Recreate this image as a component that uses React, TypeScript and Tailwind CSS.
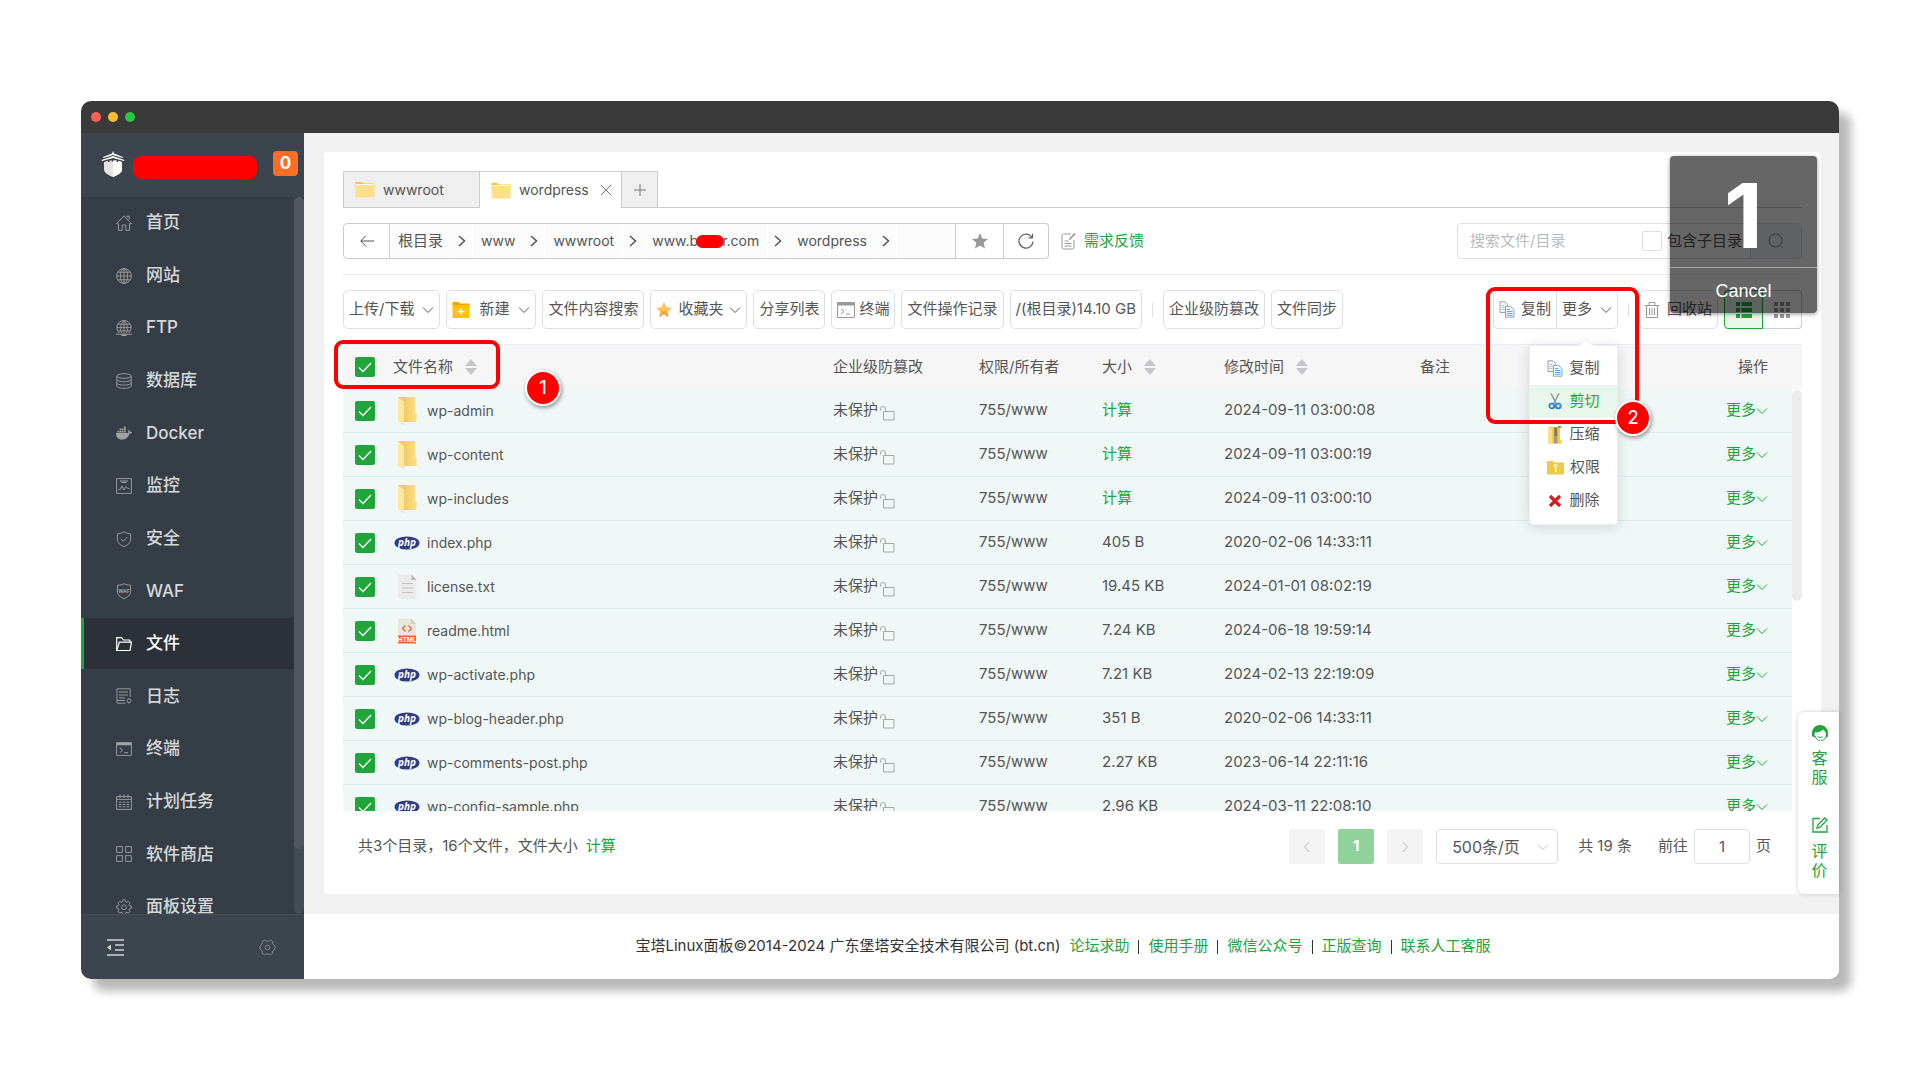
import React, { useState } from "react";
import clsx from "clsx";

type IconProps = { className?: string };

const navItems = [
  { name: "首页", icon: "home" },
  { name: "网站", icon: "globe" },
  { name: "FTP", icon: "ftp" },
  { name: "数据库", icon: "database" },
  { name: "Docker", icon: "docker" },
  { name: "监控", icon: "monitor" },
  { name: "安全", icon: "shield" },
  { name: "WAF", icon: "waf" },
  { name: "文件", icon: "folder" },
  { name: "日志", icon: "log" },
  { name: "终端", icon: "terminal" },
  { name: "计划任务", icon: "calendar" },
  { name: "软件商店", icon: "store" },
  { name: "面板设置", icon: "gear" },
];

const files = [
  { name: "wp-admin", type: "dir", size: "", time: "2024-09-11 03:00:08" },
  { name: "wp-content", type: "dir", size: "", time: "2024-09-11 03:00:19" },
  { name: "wp-includes", type: "dir", size: "", time: "2024-09-11 03:00:10" },
  { name: "index.php", type: "php", size: "405 B", time: "2020-02-06 14:33:11" },
  { name: "license.txt", type: "txt", size: "19.45 KB", time: "2024-01-01 08:02:19" },
  { name: "readme.html", type: "html", size: "7.24 KB", time: "2024-06-18 19:59:14" },
  { name: "wp-activate.php", type: "php", size: "7.21 KB", time: "2024-02-13 22:19:09" },
  { name: "wp-blog-header.php", type: "php", size: "351 B", time: "2020-02-06 14:33:11" },
  { name: "wp-comments-post.php", type: "php", size: "2.27 KB", time: "2023-06-14 22:11:16" },
  { name: "wp-config-sample.php", type: "php", size: "2.96 KB", time: "2024-03-11 22:08:10" },
];

const footerLinks = ["论坛求助", "使用手册", "微信公众号", "正版查询", "联系人工客服"];

const Gear = () => (
  <>
    <path d="M6.9 .8h2.2l.5 1.9 1.2.5 1.7-1 1.5 1.5-1 1.7.5 1.3 1.8.4v2.1l-1.8.5-.5 1.2 1 1.7-1.5 1.6-1.7-1-1.2.5-.5 1.8H6.9l-.5-1.8-1.2-.5-1.7 1L2 12.6l1-1.7-.5-1.2-1.8-.5V7.1l1.8-.4.5-1.3-1-1.7 1.5-1.5 1.7 1 1.2-.5z" />
    <circle cx="8" cy="8.2" r="2.4" />
  </>
);

const navShapes: Record<string, React.ReactNode> = {
  home: (
    <>
      <path d="M.5 8.8 8 .9l7.5 7.9h-2v6.6H9.8V10H6.2v5.4H2.5V8.8z" />
      <path d="M11 2.4V1.2h2.2v3.4" />
    </>
  ),
  globe: (
    <>
      <circle cx="8" cy="8" r="7.4" />
      <ellipse cx="8" cy="8" rx="3.6" ry="7.4" />
      <path d="M8 .6v14.8M.6 8h14.8M1.8 4.2h12.4M1.8 11.8h12.4" />
    </>
  ),
  ftp: (
    <>
      <path d="M3.4 13.2a7.2 7.2 0 1 1 9.2 0" />
      <path d="M5.6 13.2C3.9 9.6 4.3 3.4 8 .6c3.7 2.8 4.1 9 2.4 12.6M8 .6v12.6M.9 7.6h14.2M2 4.2h12M2 10.9h12M0 14.2h16" />
      <path d="M5.5 15.2h5" strokeWidth="1.6" />
    </>
  ),
  database: (
    <>
      <ellipse cx="8" cy="3" rx="7.2" ry="2.3" />
      <path d="M.8 3v10c0 1.3 3.2 2.4 7.2 2.4s7.2-1.1 7.2-2.4V3M.8 6.4c0 1.3 3.2 2.3 7.2 2.3s7.2-1 7.2-2.3M.8 9.8c0 1.3 3.2 2.3 7.2 2.3s7.2-1 7.2-2.3" />
    </>
  ),
  docker: (
    <g fill="currentColor" stroke="none">
      <path d="M0 8h12.2c.5-.8.3-1.800-.1-2.600l.6-.6c.8.500 1.300 1.200 1.400 2 .7-.1 1.500 0 2 .4-.4 1-1.300 1.500-2.600 1.500C12.300 12.400 9.800 14.500 6 14.500 2 14.500 0 11.800 0 8z" />
      <path d="M1.4 5.700h1.800v1.700H1.400zM3.600 5.700h1.800v1.700H3.600zM5.800 5.700h1.800v1.700H5.800zM8 5.700h1.800v1.700H8zM3.600 3.600h1.800v1.700H3.600zM5.800 3.600h1.800v1.700H5.800zM8 3.600h1.800v1.700H8zM8 1.500h1.800v1.700H8z" />
    </g>
  ),
  monitor: (
    <>
      <path d="M.6.6h14.8v14.8H.6z" />
      <path d="M2.5 11.5h1.8L6 8l2 4 2-3.5 1.6 2h2" />
      <path d="M4 3h8M5.5 4.5h5" strokeWidth="1.2" />
    </>
  ),
  shield: (
    <>
      <path d="M8 .7c2 1.3 4.2 2 6.6 2.1V8c0 3.7-2.5 6.2-6.6 7.5C3.9 14.2 1.4 11.7 1.4 8V2.8C3.8 2.7 6 2 8 .7z" />
      <path d="m4.8 8 2.5 2.3 4-4.3" />
    </>
  ),
  waf: (
    <>
      <path d="M8 .7c2 1 4.2 1.5 6.6 1.5V8c0 3.7-2.5 6.2-6.6 7.5C3.9 14.2 1.4 11.7 1.4 8V2.2C3.8 2.2 6 1.7 8 .7z" />
      <text x="8" y="9.6" textAnchor="middle" fontSize="5" fontWeight="700" fill="currentColor" stroke="none">WAF</text>
    </>
  ),
  folder: (
    <>
      <path d="M.7 14.5V1.6h5L7.4 4h6.4v2.2" />
      <path d="M.7 14.5 3.3 6.2h12.1l-1.3 8.3z" />
    </>
  ),
  log: (
    <>
      <path d="M14.2 9V.8H1v14.4h8.500M3 4h9M3 7h9M3 10h6" />
      <path d="M1 12.500h8" />
      <circle cx="13" cy="12.8" r="1.9" />
      <path d="M13 10v.8M13 14.800v.8" />
    </>
  ),
  terminal: (
    <>
      <path d="M.6 1.6h14.8v12.8H.6z" />
      <path d="M.6 3h14.8" strokeWidth="2.6" />
      <path d="m4 7 2.8 2.2L4 11.4M8 11.6h4" />
    </>
  ),
  calendar: (
    <>
      <path d="M.6 2.6h14.8v12.8H.6zM.6 5.4h14.8M4 .4v3.4M8 .4v3.4M12 .4v3.4" />
      <path d="M2.8 8.2h2.6M6.7 8.2h2.6M10.6 8.2h2.6M2.8 10.5h2.6M6.7 10.5h2.6M10.6 10.5h2.6M2.8 12.8h2.6M6.7 12.8h2.6M10.6 12.8h2.6" />
    </>
  ),
  store: <path d="M.6.6h5.8v5.8H.6zM9.6.6h5.8v5.8H9.6zM.6 9.6h5.8v5.8H.6zM9.6 9.6h5.8v5.8H9.6z" />,
  gear: <Gear />,
};

const Chevron = ({ className }: IconProps) => (
  <svg viewBox="0 0 12 8" className={clsx("h-2 w-3 shrink-0", className)} fill="none" stroke="currentColor">
    <path d="m1 1.5 5 5 5-5" />
  </svg>
);

const Sort = () => (
  <svg viewBox="0 0 12 18" className="h-[18px] w-3" fill="#c4c6c9">
    <path d="M6 1l6 7H0zM6 17l6-7H0z" />
  </svg>
);

const TabFolder = () => (
  <svg viewBox="0 0 20 17" className="h-[17px] w-5">
    <path d="M.5 1h6l1.500 1.500h11.500v3H.5z" fill="#fdc13c" />
    <path d="M1.500 3h17v3h-17z" fill="#fff" />
    <path d="M.5 4h19v12.500H.5z" fill="#fee08a" />
  </svg>
);

const CopyIcon = () => (
  <svg viewBox="0 0 16 17" className="h-[17px] w-4" fill="#f4f7fd" stroke="#9aa0a8">
    <path d="M1 .8h5l2.5 2.5v8.2H1z" />
    <path d="M2.5 4.5h3M2.5 6.5h3M2.5 8.5h3" stroke="#a9c3ef" />
    <path d="M6.5 5.3h5L15 8.5v7.7H6.5z" />
    <path d="M8 8.5h3M8 10.5h5.5M8 12.5h5.5M8 14.3h5.5" stroke="#6fa1f2" />
  </svg>
);

const FileIcon = ({ type }: { type: string }) => {
  if (type === "dir")
    return (
      <svg viewBox="0 0 20 30" className="h-[30px] w-5">
        <defs>
          <linearGradient id="dir" x1="0" x2="1">
            <stop offset="0.3" stopColor="#f1ca66" />
            <stop offset="1" stopColor="#fddf88" />
          </linearGradient>
        </defs>
        <path d="M1 1h17v15l1.500 2v8H1z" fill="url(#dir)" />
        <path d="m1 1 6 5v23.500l-6-4.500z" fill="#fee6a3" />
      </svg>
    );
  if (type === "php")
    return (
      <svg viewBox="0 0 26 14" className="h-3.5 w-[26px]">
        <ellipse cx="13" cy="7" rx="12.5" ry="6.6" fill="#2f3b83" />
        <text x="13" y="9.8" textAnchor="middle" fontSize="10" fontWeight="700" fontStyle="italic" fill="#fff" fontFamily="Open Sans, sans-serif">php</text>
      </svg>
    );
  if (type === "txt")
    return (
      <svg viewBox="0 0 20 26" className="h-[26px] w-5">
        <path d="M2 .5h12.500l5 5.500v18a1 1 0 0 1-1 1H2a1 1 0 0 1-1-1v-22.500a1 1 0 0 1 1-1z" fill="#ebebeb" />
        <path d="M14.500.5v5.500h5z" fill="#b9b9b9" />
        <path d="M5 9.500h11M5 14h11M5 18.500h11" stroke="#c4c4c4" />
      </svg>
    );
  return (
    <svg viewBox="0 0 20 26" className="h-[26px] w-5">
      <path d="M1 .5h13l5 5.500v12H1z" fill="#e9e7dc" />
      <path d="M14 .5v5.500h5z" fill="#cfccbc" />
      <path d="m8.500 7.500-3 3 3 3M11.500 7.500l3 3-3 3" fill="none" stroke="#f0642f" strokeWidth="1.3" />
      <path d="M1 17.500h18v8H1z" fill="#f0642f" />
      <text x="10" y="24" textAnchor="middle" fontSize="6.5" fontWeight="700" fill="#fff" fontFamily="Inter, sans-serif">HTML</text>
    </svg>
  );
};

const Lock = () => (
  <svg viewBox="0 0 16 16" className="mt-1 h-4 w-4" fill="none" stroke="#a3a8a8">
    <path d="M4.500 6.500h10.500v8.500H4.500zM6.500 6.500V4A2.500 2.500 0 0 0 1.500 4v1.500" />
  </svg>
);

const CheckBox = ({ label, checked, onChange }: { label: string; checked: boolean; onChange: () => void }) => (
  <label className="grid h-5 w-5 cursor-pointer">
    <input
      type="checkbox"
      aria-label={label}
      checked={checked}
      onChange={onChange}
      className="col-start-1 row-start-1 h-5 w-5 appearance-none rounded-xs border border-[#dcdfe6] bg-white checked:border-[#20a53a] checked:bg-[#20a53a]"
    />
    {checked && (
      <svg viewBox="0 0 20 20" className="pointer-events-none col-start-1 row-start-1 h-5 w-5" fill="none" stroke="#fff" strokeWidth="1.3">
        <path d="m4 10.500 4 4 8-8.500" />
      </svg>
    )}
  </label>
);

const ToolButton = ({ children, className }: { children: React.ReactNode; className?: string }) => (
  <button
    type="button"
    className={clsx("flex h-[39px] items-center rounded-[5px] border border-[#dcdfe6] bg-white px-[5px] whitespace-nowrap", className)}
  >
    {children}
  </button>
);

const Step = ({ n, className }: { n: number; className?: string }) => (
  <span
    className={clsx(
      "absolute flex h-9 w-9 items-center justify-center rounded-full border-2 border-white bg-[#fe0000] text-lg font-medium text-white shadow-[1px_2px_4px_rgba(0,0,0,0.4)]",
      className,
    )}
  >
    {n}
  </span>
);

const Sidebar = () => (
  <aside className="flex w-[223px] shrink-0 flex-col bg-[#3c444d]">
    <div className="flex h-16 items-center pb-[3px] pl-5">
      <svg viewBox="0 0 24 26" className="h-[26px] w-6" fill="#fff">
        <path d="M12 0 13 2.500l9 3.500-.5 1L12 4 2.500 7 2 6l9-3.500zM12 5l11.500 4-.5 1L12 7 1 10l-.5-1z" />
        <path d="M3 11h1.500v-1H7v1h1.500V9.500H11v1h2v-1h2.500V11H17v-1h2.500v1H21v7.500c0 3-4 5.500-9 7.500-5-2-9-4.500-9-7.500z" fill="#e3e3e3" />
        <path d="M12 9.500h3.500V11H17v-1h2.500v1H21v7.500c0 3-4 5.500-9 7.500z" />
      </svg>
      <span className="mt-2 ml-2 h-[23px] w-[124px] rounded-lg bg-[#fe0000]" />
      <span className="ml-4 flex h-[25px] w-[25px] items-center justify-center rounded bg-[#fd6d25] text-[17px] font-bold text-white">
        0
      </span>
    </div>
    <div className="flex h-[717px] overflow-hidden bg-[#353d46]">
      <nav className="flex-1">
        <ul className="flex h-[735px] flex-col justify-between">
          {navItems.map((item) => {
            const active = item.name === "文件";
            return (
              <li key={item.name}>
                <a
                  href="#"
                  className={clsx(
                    "flex h-[51px] items-center gap-[14px] border-l-3 pt-px pl-8 text-[17px] font-medium",
                    active ? "border-[#20a53a] bg-[#2c3039] text-white" : "border-transparent text-[#d6d8da]",
                  )}
                >
                  <svg
                    viewBox="0 0 16 16"
                    className={clsx("h-4 w-4", active ? "text-white" : "text-[#a0a3a6]")}
                    fill="none"
                    stroke="currentColor"
                    strokeWidth={active ? 1.2 : 0.9}
                  >
                    {navShapes[item.icon]}
                  </svg>
                  {item.name}
                </a>
              </li>
            );
          })}
        </ul>
      </nav>
      <div className="w-[10px] rounded-full bg-[#434b54]">
        <div className="h-[652px] rounded-full bg-[#50575f]" />
      </div>
    </div>
    <div className="flex h-[65px] items-center justify-between border-t border-[#434c56] pr-7 pl-[26px]">
      <button type="button" aria-label="收起菜单">
        <svg viewBox="0 0 17 17" className="h-[17px] w-[17px]" fill="none" stroke="#d0d3d5" strokeWidth="1.4">
          <path d="M0 1h17M8 6h9M8 11h9M0 16h17" />
          <path d="M0 8.500 4 5.500v6z" fill="#d0d3d5" stroke="none" />
        </svg>
      </button>
      <button type="button" aria-label="设置">
        <svg viewBox="0 0 17 17" className="h-[17px] w-[17px]" fill="none" stroke="#80868c">
          <path d="M5.500 1.200 7 2h3l1.500-.8 2.200 1.300V5l2.300 2v3l-2.300 2v2.300l-2.200 1.400L10 15H7l-1.500.7-2.200-1.400V12L1 10V7l2.300-2V2.500z" />
          <circle cx="8.5" cy="8.5" r="2.3" />
        </svg>
      </button>
    </div>
  </aside>
);

const Tabs = () => (
  <div className="flex h-[37px] text-sm">
    <button type="button" className="flex w-[136px] items-center gap-2 border border-r-0 border-[#ccc] bg-[#efefef] pl-[11px]">
      <TabFolder />
      <span>wwwroot</span>
    </button>
    <button type="button" className="flex w-[143px] items-center gap-2 border border-b-0 border-[#ccc] pl-[11px]">
      <TabFolder />
      <span>wordpress</span>
      <svg viewBox="0 0 12 12" className="mr-[9px] ml-auto h-3 w-3" stroke="#777">
        <path d="m1 1 10 10M11 1 1 11" />
      </svg>
    </button>
    <button type="button" aria-label="新建标签" className="flex w-9 items-center justify-center border border-l-0 border-[#ccc] bg-[#efefef]">
      <svg viewBox="0 0 12 12" className="h-3 w-3" stroke="#777">
        <path d="M6 0v12M0 6h12" />
      </svg>
    </button>
    <div className="flex-1 border-b border-[#ccc]" />
  </div>
);

const PathArrow = () => (
  <span className="flex w-[22px] justify-center self-stretch border-x border-white">
    <svg viewBox="0 0 8 12" className="h-3 w-2 self-center" fill="none" stroke="#555" strokeWidth="1.5">
      <path d="m1 1 5.500 5L1 11" />
    </svg>
  </span>
);

const PathBar = () => (
  <div className="flex h-9 items-center">
    <button type="button" aria-label="返回" className="flex h-9 w-[47px] items-center justify-center rounded-l-sm border border-[#ccc]">
      <svg viewBox="0 0 14 12" className="h-3 w-3.5" fill="none" stroke="#555">
        <path d="M6 .5.8 6 6 11.500M.8 6H14" />
      </svg>
    </button>
    <div className="flex h-9 w-[565px] items-center border-y border-[#ccc] bg-[#fcfcfc] text-sm">
      <a href="#" className="px-2 text-[15px]">根目录</a>
      <PathArrow />
      <a href="#" className="px-2">www</a>
      <PathArrow />
      <a href="#" className="px-2">wwwroot</a>
      <PathArrow />
      <a href="#" className="flex items-center px-2">
        www.b
        <span className="-mx-0.5 h-[13px] w-7 rounded-full bg-[#fe0000]" />
        r.com
      </a>
      <PathArrow />
      <a href="#" className="px-2">wordpress</a>
      <PathArrow />
    </div>
    <button type="button" aria-label="收藏" className="flex h-9 w-[49px] items-center justify-center border border-[#ccc]">
      <svg viewBox="0 0 16 16" className="h-4 w-4" fill="#999">
        <path d="m8 0 2.300 5.400 5.700.5-4.300 3.800 1.300 5.800-5-3-5 3 1.300-5.800L0 5.900l5.700-.5z" />
      </svg>
    </button>
    <button type="button" aria-label="刷新" className="flex h-9 w-[45px] items-center justify-center rounded-r-sm border border-l-0 border-[#ccc]">
      <svg viewBox="0 0 16 16" className="h-4 w-4" fill="none" stroke="#666" strokeWidth="1.2">
        <path d="M13.800 4.200A7 7 0 1 0 15 8.500M14.500.8v4h-4" />
      </svg>
    </button>
    <a href="#" className="ml-3 flex items-center gap-2 text-[15px] text-[#20a53a]">
      <svg viewBox="0 0 15 17" className="h-[17px] w-[15px]" fill="none" stroke="#999">
        <path d="M10 1H2.500A1.500 1.500 0 0 0 1 2.500v12A1.500 1.500 0 0 0 2.500 16h9a1.500 1.500 0 0 0 1.500-1.500V7M3.500 8h4M3.500 10.500h7M3.500 13h7" />
        <path d="m8.500 6.500 5.500-6" strokeWidth="1.800" />
      </svg>
      需求反馈
    </a>
    <form className="ml-auto flex h-9 w-[345px] items-center overflow-hidden rounded border border-[#dcdfe6]">
      <input
        type="text"
        aria-label="搜索文件/目录"
        placeholder="搜索文件/目录"
        className="min-w-0 flex-1 pl-3 text-[15px] outline-none placeholder:text-[#b9bbc0]"
      />
      <input id="subdir" type="checkbox" className="h-5 w-5 appearance-none rounded-xs border border-[#dcdfe6]" />
      <label htmlFor="subdir" className="w-[88px] pl-[5px] text-[15px] whitespace-nowrap">包含子目录</label>
      <button type="button" aria-label="搜索" className="flex h-full w-[51px] items-center justify-center border-l border-[#dcdfe6] bg-[#f1f3f8]">
        <svg viewBox="0 0 16 16" className="h-4 w-4" fill="none" stroke="#888">
          <circle cx="7.5" cy="7.5" r="6.5" />
          <path d="m12 12.500 2.500 2.500" />
        </svg>
      </button>
    </form>
  </div>
);

const menuItems = [
  { name: "复制", icon: <CopyIcon /> },
  {
    name: "剪切",
    icon: (
      <svg viewBox="0 0 14 17" className="h-[17px] w-4" fill="none">
        <path d="M3 .5 8.500 11M11 .5 5.500 11" stroke="#8b98a3" strokeWidth="1.5" />
        <circle cx="3.8" cy="13" r="2.4" stroke="#2f86d8" strokeWidth="1.9" />
        <circle cx="10.2" cy="13" r="2.4" stroke="#2f86d8" strokeWidth="1.9" />
      </svg>
    ),
  },
  {
    name: "压缩",
    icon: (
      <svg viewBox="0 0 14 18" className="h-[18px] w-4">
        <path d="M.5 1H12v12l1.500 2v2.500H.5z" fill="#f2cb4e" />
        <path d="M.5 1 4 3v14.500H.5z" fill="#f9df86" />
        <path d="M6 1h3.500v16.500H6z" fill="#a9997a" />
        <path d="M6.500 3h2.500M6.500 5h2.500M6.500 7h2.500M6.500 9h2.500" stroke="#5b574c" />
        <path d="M10 0h3v2h-3z" fill="#5bbb3a" />
      </svg>
    ),
  },
  {
    name: "权限",
    icon: (
      <svg viewBox="0 0 17 15" className="h-[15px] w-[17px]">
        <path d="M0 1h6l1.500 1.500H17V14.500H0z" fill="#f0c945" />
        <circle cx="8.5" cy="6" r="1.5" fill="none" stroke="#fff" />
        <path d="M8.500 7.500v4.500M8.500 9.500h1.500M8.500 11.500h1.500" stroke="#fff" />
      </svg>
    ),
  },
  {
    name: "删除",
    icon: (
      <svg viewBox="0 0 14 14" className="h-3.5 w-4" stroke="#d51c20" strokeWidth="3.2">
        <path d="M2 2l10 10M12 2 2 12" />
      </svg>
    ),
  },
];

const MoreMenu = () => (
  <div className="absolute top-[55px] right-0 z-10 w-[89px] rounded border border-[#ebeef5] bg-white pt-[6px] pb-[7px] shadow-[0_2px_14px_rgba(0,0,0,0.14)]">
    <span className="absolute -top-[6px] right-[26px] h-[10px] w-[10px] rotate-45 border-t border-l border-[#ebeef5] bg-white" />
    {menuItems.map((item) => (
      <button
        key={item.name}
        type="button"
        className={clsx(
          "relative flex h-[33px] w-full items-center justify-center gap-[6px] text-[15px]",
          item.name === "剪切" && "bg-[#e9f6eb] text-[#20a53a]",
        )}
      >
        {item.icon}
        {item.name}
      </button>
    ))}
  </div>
);

const Toolbar = () => (
  <div className="flex items-center gap-[6px] text-[15px]">
    <ToolButton className="gap-2">上传/下载<Chevron /></ToolButton>
    <ToolButton className="gap-[9px]">
      <svg viewBox="0 0 18 16" className="h-4 w-[18px]">
        <path d="M.5 0h6l1.500 1.500h9.500v3H.5z" fill="#f5a30b" />
        <path d="M.5 3h17v13H.5z" fill="#fdc209" />
        <path d="M9 6v7M5.500 9.500h7" stroke="#fff" strokeWidth="1.3" />
      </svg>
      新建
      <Chevron />
    </ToolButton>
    <ToolButton>文件内容搜索</ToolButton>
    <ToolButton className="gap-[6px]">
      <svg viewBox="0 0 16 16" className="h-4 w-4" fill="#f8a53a">
        <path d="m8 .5 2.200 5 5.500.5-4.200 3.700 1.300 5.500L8 12.400l-4.800 2.800 1.300-5.500L.3 6l5.500-.5z" />
        <path d="m8 .5 2.200 5 5.500.5-4.200 3.200L4.500 9.300.3 6l5.500-.5z" fill="#fbc361" />
      </svg>
      收藏夹
      <Chevron />
    </ToolButton>
    <ToolButton>分享列表</ToolButton>
    <ToolButton className="gap-1">
      <svg viewBox="0 0 18 16" className="h-4 w-[18px]" fill="none" stroke="#999">
        <path d="M.5.5h17v15H.5z" />
        <path d="M.5 2h17" strokeWidth="3" />
        <path d="m4 7 3 2.500L4 12M9 12h4" />
      </svg>
      终端
    </ToolButton>
    <ToolButton>文件操作记录</ToolButton>
    <ToolButton>/(根目录)14.10 GB</ToolButton>
    <span className="mx-1 h-3.5 w-px bg-[#dcdfe6]" />
    <ToolButton>企业级防篡改</ToolButton>
    <ToolButton>文件同步</ToolButton>

    <div className="relative ml-auto flex">
      <ToolButton className="w-[63px] justify-center gap-[6px] rounded-r-none border-r-0">
        <CopyIcon />
        复制
      </ToolButton>
      <ToolButton className="w-[62px] justify-center gap-2 rounded-l-none">
        更多
        <Chevron />
      </ToolButton>
      <MoreMenu />
      <div className="absolute -top-[3px] -left-[7px] z-10 h-[137px] w-[153px] rounded-[9px] border-4 border-[#fe0000]" />
      <Step n={2} className="top-[110px] -right-[33px] z-10" />
    </div>
    <span className="mx-1 h-3.5 w-px bg-[#dcdfe6]" />
    <ToolButton className="w-[79px] justify-center gap-2">
      <svg viewBox="0 0 14 16" className="h-4 w-3.5 shrink-0" fill="none" stroke="#999">
        <path d="M0 3.500h14M4 3.500v-3h6v3M1.500 3.500v12h11v-12M4.500 6v7M7 6v7M9.500 6v7" />
      </svg>
      回收站
    </ToolButton>
    <div className="flex">
      <button type="button" aria-label="列表视图" className="flex h-[39px] w-[39px] items-center justify-center rounded-l-sm border border-[#20a53a] bg-[#e9f6eb]">
        <svg viewBox="0 0 16 16" className="h-4 w-4" fill="#20a53a">
          <path d="M0 0h4v4H0zM0 6h4v4H0zM0 12h4v4H0zM5.500 0H16v4H5.500zM5.500 6H16v4H5.500zM5.500 12H16v4H5.500z" />
        </svg>
      </button>
      <button type="button" aria-label="图标视图" className="flex h-[39px] w-[39px] items-center justify-center rounded-r-sm border border-l-0 border-[#ccc]">
        <svg viewBox="0 0 16 16" className="h-4 w-4" fill="#999">
          <path d="M0 0h4v4H0zM6 0h4v4H6zM12 0h4v4h-4zM0 6h4v4H0zM6 6h4v4H6zM12 6h4v4h-4zM0 12h4v4H0zM6 12h4v4H6zM12 12h4v4h-4z" />
        </svg>
      </button>
    </div>
  </div>
);

const FileTable = () => {
  const [selected, setSelected] = useState<string[]>(files.map((f) => f.name));
  const all = selected.length === files.length;
  const toggle = (name: string) =>
    setSelected((prev) => (prev.includes(name) ? prev.filter((n) => n !== name) : [...prev, name]));

  return (
    <div className="relative">
      <div className="h-[467px] overflow-hidden">
        <table className="w-full table-fixed border-separate border-spacing-0 text-left">
          <colgroup>
            <col className="w-[38px]" />
            <col />
            <col className="w-[146px]" />
            <col className="w-[123px]" />
            <col className="w-[122px]" />
            <col className="w-[196px]" />
            <col className="w-[292px]" />
            <col className="w-[92px]" />
            <col className="w-[10px]" />
          </colgroup>
          <thead>
            <tr className="h-[45px] text-[15px] [&>th]:border-t [&>th]:border-[#ebeef5] [&>th]:bg-[#f6f6f6] [&>th]:p-0 [&>th]:pl-3 [&>th]:font-normal">
              <th><CheckBox label="全选" checked={all} onChange={() => setSelected(all ? [] : files.map((f) => f.name))} /></th>
              <th><span className="flex items-center gap-3">文件名称<Sort /></span></th>
              <th>企业级防篡改</th>
              <th>权限/所有者</th>
              <th><span className="flex items-center gap-3">大小<Sort /></span></th>
              <th><span className="flex items-center gap-3">修改时间<Sort /></span></th>
              <th>备注</th>
              <th><span className="block pr-6 text-right">操作</span></th>
              <th />
            </tr>
          </thead>
          <tbody>
            {files.map((f) => (
              <tr key={f.name} className="h-11 text-[15px] [&>td]:border-b [&>td]:border-[#d8efea] [&>td]:bg-[#f0f8f7] [&>td]:p-0 [&>td]:pl-3">
                <td><CheckBox label={f.name} checked={selected.includes(f.name)} onChange={() => toggle(f.name)} /></td>
                <td>
                  <span className="flex items-center gap-[6px] text-sm">
                    <span className="flex w-7 justify-center"><FileIcon type={f.type} /></span>
                    {f.name}
                  </span>
                </td>
                <td><span className="flex items-center gap-px">未保护<Lock /></span></td>
                <td>755/www</td>
                <td>{f.size || <a href="#" className="text-[#20a53a]">计算</a>}</td>
                <td>{f.time}</td>
                <td />
                <td>
                  <button type="button" className="mr-6 ml-auto flex items-center text-[#20a53a]">更多<Chevron /></button>
                </td>
                <td className="border-white! bg-white!" />
              </tr>
            ))}
          </tbody>
        </table>
      </div>
      <div className="absolute top-[46px] right-0 h-[211px] w-[10px] rounded-full bg-[#ececec]" />
      <div className="absolute -top-1 -left-[9px] h-[49px] w-[166px] rounded-[9px] border-4 border-[#fe0000]" />
      <Step n={1} className="top-[26px] left-[182px]" />
    </div>
  );
};

const Pager = () => (
  <div className="flex items-center pr-[31px] pl-[15px] text-[15px]">
    <span>共3个目录，16个文件，文件大小</span>
    <a href="#" className="ml-2 text-[#20a53a]">计算</a>
    <div className="ml-auto flex items-center gap-[13px]">
      <button type="button" aria-label="上一页" className="flex h-[35px] w-9 items-center justify-center rounded-xs bg-[#f4f4f5]">
        <Chevron className="rotate-90 text-[#b8bbc1]" />
      </button>
      <button type="button" className="h-[35px] w-9 rounded-xs bg-[#8fd29c] font-bold text-white">1</button>
      <button type="button" aria-label="下一页" className="flex h-[35px] w-9 items-center justify-center rounded-xs bg-[#f4f4f5]">
        <Chevron className="-rotate-90 text-[#b8bbc1]" />
      </button>
      <div className="grid w-[122px] items-center">
        <select aria-label="每页条数" className="col-start-1 row-start-1 h-[35px] appearance-none rounded border border-[#dcdfe6] pl-[15px] text-base">
          <option>500条/页</option>
        </select>
        <Chevron className="pointer-events-none col-start-1 row-start-1 mr-[9px] justify-self-end text-[#c0c4cc]" />
      </div>
    </div>
    <span className="ml-5">共 19 条</span>
    <label htmlFor="page" className="ml-[26px]">前往</label>
    <input id="page" type="text" defaultValue="1" className="mx-[6px] h-[35px] w-14 rounded border border-[#dcdfe6] text-center" />
    <span>页</span>
  </div>
);

const SideWidget = () => (
  <div className="absolute right-0 bottom-[85px] flex w-[41px] flex-col items-center rounded-l-md bg-white pt-3 pb-[14px] pl-0.5 text-base text-[#20a53a] shadow-[0_0_4px_rgba(0,0,0,0.2)]">
    <a href="#" className="flex w-4 flex-col items-center leading-[19px]">
      <svg viewBox="0 0 18 18" className="mb-[7px] h-[18px] w-[18px]">
        <path d="M1 9a8 8 0 0 1 16 0v2.500a2 2 0 0 1-2.500 1.800C16 7.500 13 7 12 5.500 10 8 6 8.500 3.800 8.500c-.4 1.700-.3 3.300.2 4.700C2 13.500 1 12.500 1 11z" fill="#20a53a" />
        <path d="M4 12c1 3 3 4.500 5 4.500M15 13c-1 2.500-3 3.500-5 3.500M6.500 12.500c1.500 1.200 3.500 1.200 5 0" fill="none" stroke="#20a53a" />
      </svg>
      客服
    </a>
    <a href="#" className="mt-[30px] flex w-4 flex-col items-center leading-[19px]">
      <svg viewBox="0 0 16 16" className="mb-[9px] h-4 w-4" fill="none" stroke="#20a53a" strokeWidth="1.3">
        <path d="M8 1.500H1v13.500h14V8" />
        <path d="m5 11 .8-3 7-7 2.200 2-7 7.200z" />
      </svg>
      评价
    </a>
  </div>
);

const Countdown = () => (
  <div className="absolute top-[55px] right-[22px] z-20 w-[147px] rounded bg-black/60 text-center text-white shadow-[0_1px_4px_rgba(0,0,0,0.4)]">
    <div className="h-[111px] pt-[10px] text-[90px] leading-[100px] font-bold">1</div>
    <button type="button" className="h-[46px] w-full border-t border-white/40 font-['Liberation_Sans',sans-serif] text-lg">Cancel</button>
  </div>
);

const App = () => {
  return (
    <div className="min-h-screen bg-white px-[81px] py-[101px] font-[Inter,'Noto_Sans_CJK_SC',sans-serif] text-[#555]">
      <div className="relative rounded-[10px] shadow-[12px_12px_10px_rgba(0,0,0,0.28)]">
        <div className="overflow-hidden rounded-[10px]">
          <div className="flex h-8 items-center gap-[7px] bg-[#3a3a3a] pl-[10px]">
            <span className="h-[10px] w-[10px] rounded-full bg-[#ff5f57]" />
            <span className="h-[10px] w-[10px] rounded-full bg-[#febc2e]" />
            <span className="h-[10px] w-[10px] rounded-full bg-[#28c840]" />
          </div>
          <div className="flex">
            <Sidebar />
            <div className="flex min-w-0 flex-1 flex-col bg-[#f1f1f1]">
              <main className="mt-[19px] mr-[18px] mb-5 ml-5 flex-1 rounded bg-white px-[19px] pt-[19px]">
                <Tabs />
                <div className="mt-[15px] border-b border-[#ebeef5] pb-[15px]">
                  <PathBar />
                </div>
                <div className="py-[15px]">
                  <Toolbar />
                </div>
                <FileTable />
                <div className="pt-[18px] pb-[30px]">
                  <Pager />
                </div>
              </main>
              <footer className="flex h-[65px] items-center justify-center bg-white pr-2 text-[15px] text-[#333]">
                <span>宝塔Linux面板©2014-2024 广东堡塔安全技术有限公司 (bt.cn)</span>
                {footerLinks.map((link, i) => (
                  <React.Fragment key={link}>
                    {i > 0 && <span className="h-3.5 w-px bg-[#333]" />}
                    <a href="#" className="px-[9px] text-[#20a53a]">{link}</a>
                  </React.Fragment>
                ))}
              </footer>
            </div>
          </div>
        </div>
        <SideWidget />
        <Countdown />
      </div>
    </div>
  );
};

export default App;
